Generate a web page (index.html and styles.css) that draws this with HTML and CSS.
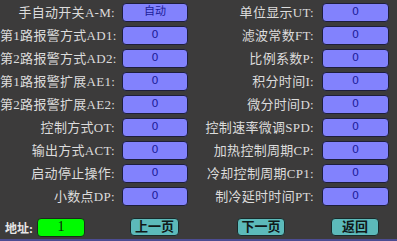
FILE: index.html
```html
<!DOCTYPE html>
<html>
<head>
<meta charset="utf-8">
<link rel="stylesheet" href="styles.css">
</head>
<body>
<div class="screen">
  <div class="grid">
    <div class="lbl l1">手自动开关A-M:</div><div class="box">自动</div>
    <div class="lbl l2">单位显示UT:</div><div class="box">0</div>

    <div class="lbl l1">第1路报警方式AD1:</div><div class="box">0</div>
    <div class="lbl l2">滤波常数FT:</div><div class="box">0</div>

    <div class="lbl l1">第2路报警方式AD2:</div><div class="box">0</div>
    <div class="lbl l2">比例系数P:</div><div class="box">0</div>

    <div class="lbl l1">第1路报警扩展AE1:</div><div class="box">0</div>
    <div class="lbl l2">积分时间I:</div><div class="box">0</div>

    <div class="lbl l1">第2路报警扩展AE2:</div><div class="box">0</div>
    <div class="lbl l2">微分时间D:</div><div class="box">0</div>

    <div class="lbl l1">控制方式OT:</div><div class="box">0</div>
    <div class="lbl l2">控制速率微调SPD:</div><div class="box">0</div>

    <div class="lbl l1">输出方式ACT:</div><div class="box">0</div>
    <div class="lbl l2">加热控制周期CP:</div><div class="box">0</div>

    <div class="lbl l1">启动停止操作:</div><div class="box">0</div>
    <div class="lbl l2">冷却控制周期CP1:</div><div class="box">0</div>

    <div class="lbl l1">小数点DP:</div><div class="box">0</div>
    <div class="lbl l2">制冷延时时间PT:</div><div class="box">0</div>
  </div>
  <div class="footer">
    <span class="addr">地址:</span>
    <div class="green">1</div>
    <div class="btn prev">上一页</div>
    <div class="btn next">下一页</div>
    <div class="btn back">返回</div>
  </div>
</div>
</body>
</html>
```
FILE: styles.css
```css
html, body {
  margin: 0;
  padding: 0;
  background: #3c3b3b;
}
.screen {
  width: 397px;
  height: 241px;
  box-sizing: border-box;
  border-bottom: 2px solid #4c4c92;
  background: #3c3b3b;
  font-family: "Liberation Serif", "Noto Sans CJK SC", serif;
  color: #dcdcdc;
  overflow: hidden;
}
.grid {
  display: grid;
  grid-template-columns: 122px 66px 134px 67px;
  grid-auto-rows: 19px;
  row-gap: 4px;
  padding-top: 3px;
}
.lbl {
  text-align: right;
  font-size: 13px;
  line-height: 19px;
  white-space: nowrap;
  letter-spacing: 0.3px;
}
.l1 { padding-right: 7px; }
.l2 { padding-right: 8px; }
.box {
  box-sizing: border-box;
  background: #8282fd;
  border: 1.5px solid #1e1e3c;
  border-radius: 4px;
  color: #1c1c9a;
  font-family: "DejaVu Sans", "Noto Sans CJK SC", sans-serif;
  font-size: 11px;
  line-height: 16px;
  text-align: center;
}
.footer {
  display: flex;
  align-items: center;
  margin-top: 12px;
  height: 19px;
}
.addr {
  margin-left: 5px;
  width: 32px;
  font-size: 12px;
  font-weight: bold;
  color: #e6e6e6;
}
.green {
  box-sizing: border-box;
  width: 48px;
  height: 19px;
  background: #00fb00;
  border: 1.5px solid #1c2a1c;
  border-radius: 4px;
  color: #0c200c;
  font-size: 14px;
  line-height: 16px;
  text-align: center;
}
.btn {
  box-sizing: border-box;
  width: 49px;
  height: 18px;
  background: #5cbaba;
  border: 1.5px solid #1a2a2a;
  border-radius: 4px;
  color: #101818;
  font-size: 13px;
  font-weight: bold;
  line-height: 15px;
  text-align: center;
  align-self: flex-start;
}
.prev { margin-left: 45px; }
.next { margin-left: 58px; width: 48px; }
.back { margin-left: 46px; width: 48px; }
```
